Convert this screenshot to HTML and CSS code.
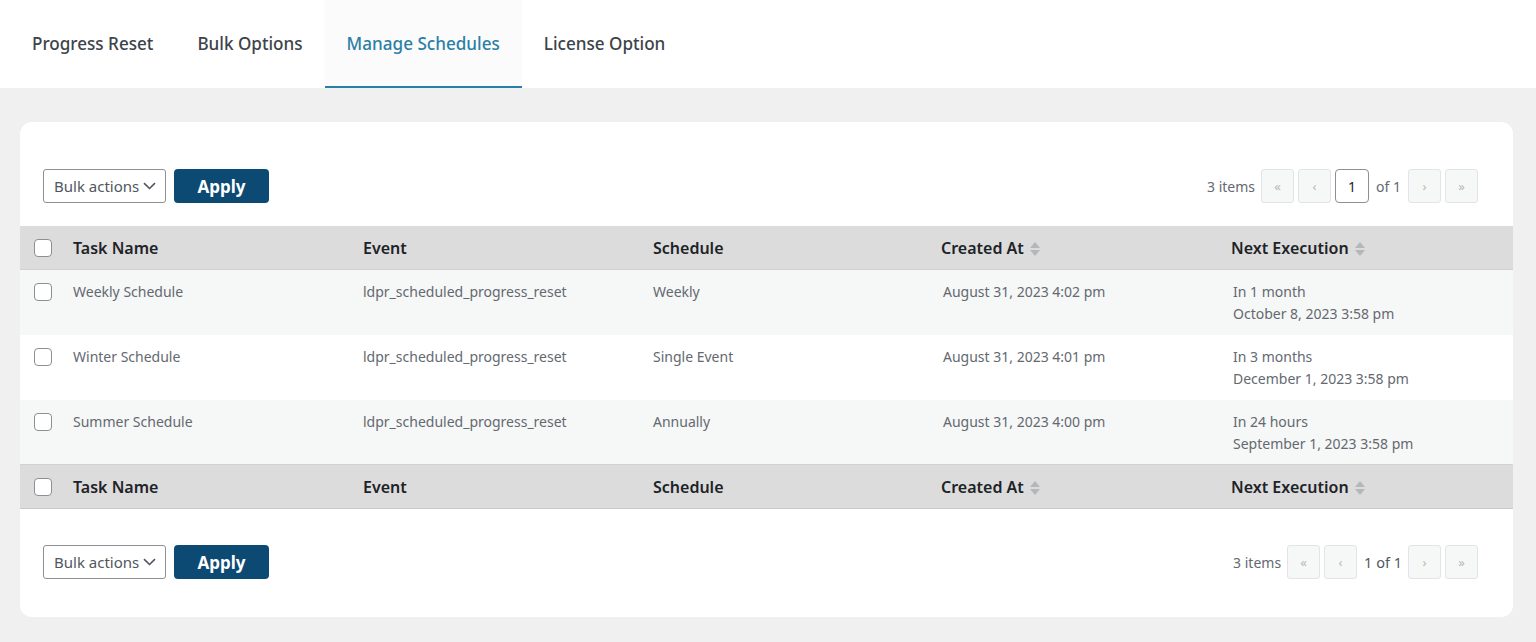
FILE: index.html
```html
<!DOCTYPE html>
<html lang="en">
<head>
   <meta charset="UTF-8">
   <meta name="viewport" content="width=device-width, initial-scale=1.0">
   <title>Manage Schedules</title>
   <link rel="stylesheet" href="styles.css">
</head>
<body>
   <nav class="tabs">
      <a class="tab">Progress Reset</a>
      <a class="tab">Bulk Options</a>
      <a class="tab active">Manage Schedules</a>
      <a class="tab">License Option</a>
   </nav>

   <main class="page">
      <div class="card">
         <div class="tablenav top">
            <div class="actions">
               <div class="select">Bulk actions
                  <svg width="13" height="8" viewBox="0 0 13 8"><path d="M1 1.2l5.5 5.3 5.5-5.3" fill="none" stroke="#50575e" stroke-width="1.6"/></svg>
               </div>
               <button class="apply">Apply</button>
            </div>
            <div class="pages">
               <span class="count">3 items</span>
               <span class="pbtn">&laquo;</span>
               <span class="pbtn">&lsaquo;</span>
               <span class="current">1</span>
               <span class="of">of 1</span>
               <span class="pbtn">&rsaquo;</span>
               <span class="pbtn">&raquo;</span>
            </div>
         </div>

         <table class="list">
            <colgroup>
               <col class="c-check"><col><col><col><col><col>
            </colgroup>
            <thead>
               <tr>
                  <th class="check"><span class="box"></span></th>
                  <th>Task Name</th>
                  <th>Event</th>
                  <th>Schedule</th>
                  <th class="sort">Created At <span class="arrows"></span></th>
                  <th class="sort">Next Execution <span class="arrows"></span></th>
               </tr>
            </thead>
            <tbody>
               <tr>
                  <td class="check"><span class="box"></span></td>
                  <td>Weekly Schedule</td>
                  <td>ldpr_scheduled_progress_reset</td>
                  <td>Weekly</td>
                  <td class="date">August 31, 2023 4:02 pm</td>
                  <td>In 1 month<br>October 8, 2023 3:58 pm</td>
               </tr>
               <tr>
                  <td class="check"><span class="box"></span></td>
                  <td>Winter Schedule</td>
                  <td>ldpr_scheduled_progress_reset</td>
                  <td>Single Event</td>
                  <td class="date">August 31, 2023 4:01 pm</td>
                  <td>In 3 months<br>December 1, 2023 3:58 pm</td>
               </tr>
               <tr>
                  <td class="check"><span class="box"></span></td>
                  <td>Summer Schedule</td>
                  <td>ldpr_scheduled_progress_reset</td>
                  <td>Annually</td>
                  <td class="date">August 31, 2023 4:00 pm</td>
                  <td>In 24 hours<br>September 1, 2023 3:58 pm</td>
               </tr>
            </tbody>
            <tfoot>
               <tr>
                  <th class="check"><span class="box"></span></th>
                  <th>Task Name</th>
                  <th>Event</th>
                  <th>Schedule</th>
                  <th class="sort">Created At <span class="arrows"></span></th>
                  <th class="sort">Next Execution <span class="arrows"></span></th>
               </tr>
            </tfoot>
         </table>

         <div class="tablenav bottom">
            <div class="actions">
               <div class="select">Bulk actions
                  <svg width="13" height="8" viewBox="0 0 13 8"><path d="M1 1.2l5.5 5.3 5.5-5.3" fill="none" stroke="#50575e" stroke-width="1.6"/></svg>
               </div>
               <button class="apply">Apply</button>
            </div>
            <div class="pages">
               <span class="count">3 items</span>
               <span class="pbtn">&laquo;</span>
               <span class="pbtn">&lsaquo;</span>
               <span class="of wide">1 of 1</span>
               <span class="pbtn">&rsaquo;</span>
               <span class="pbtn">&raquo;</span>
            </div>
         </div>
      </div>
   </main>
</body>
</html>
```

FILE: styles.css
```css
body {
   margin: 0;
   background: #f0f0f1;
   font-family: "Noto Sans", "Open Sans", sans-serif;
   color: #1d2327;
}
.tabs {
   height: 88px;
   background: #fff;
   display: flex;
   padding-left: 10px;
}
.tab {
   display: flex;
   align-items: center;
   padding: 0 22px;
   font-size: 17.1px;
   font-weight: 500;
   color: #3c434a;
   border-bottom: 2px solid transparent;
}
.tab.active {
   color: #2b7fa6;
   background: #fbfbfb;
   border-bottom-color: #2b7fa6;
}
.page {
   padding: 34px 23px 25px 20px;
}
.card {
   background: #fff;
   border-radius: 12px;
   padding: 47px 0 38px;
}
.tablenav {
   display: flex;
   justify-content: space-between;
   align-items: center;
   padding: 0 35px 0 23px;
   height: 34px;
}
.tablenav.bottom {
   margin-top: 36px;
}
.actions {
   display: flex;
   gap: 8px;
}
.select {
   width: 123px;
   height: 34px;
   box-sizing: border-box;
   padding: 0 9px 0 10px;
   border: 1px solid #8c8f94;
   border-radius: 3px;
   display: flex;
   align-items: center;
   justify-content: space-between;
   font-size: 15px;
   color: #50575e;
}
.apply {
   width: 95px;
   height: 34px;
   background: #0d4a73;
   border: none;
   border-radius: 4px;
   color: #fff;
   font-family: inherit;
   font-size: 17px;
   font-weight: 700;
}
.pages {
   display: flex;
   align-items: center;
   gap: 4px;
   font-size: 14px;
   color: #646970;
}
.count {
   margin-right: 2px;
}
.pbtn {
   width: 33px;
   height: 34px;
   box-sizing: border-box;
   display: flex;
   align-items: center;
   justify-content: center;
   background: #f6f7f7;
   border: 1px solid #e2e4e7;
   border-radius: 3px;
   color: #b4b7ba;
   font-size: 13px;
}
.current {
   width: 34px;
   height: 34px;
   box-sizing: border-box;
   display: flex;
   align-items: center;
   justify-content: center;
   border: 1px solid #8c8f94;
   border-radius: 4px;
   color: #1d2327;
}
.of {
   margin: 0 3px;
}
.of.wide {
   margin: 0 2px 0 3px;
   font-size: 14.5px;
   color: #50575e;
}
.list {
   width: 100%;
   border-collapse: collapse;
   table-layout: fixed;
   margin-top: 23px;
}
.c-check {
   width: 43px;
}
.list th {
   background: #dcdcdc;
   height: 43px;
   padding: 0 10px;
   text-align: left;
   font-size: 16px;
   font-weight: 600;
   color: #1d2327;
}
.list th.sort {
   padding-left: 8px;
}
.list thead th {
   border-bottom: 1px solid #d2d2d2;
}
.list td {
   height: 65px;
   box-sizing: border-box;
   padding: 11px 10px 0;
   vertical-align: top;
   font-size: 14px;
   line-height: 22px;
   color: #646970;
}
.list tbody tr:nth-child(odd) td {
   background: #f6f7f7;
}
.list tfoot th {
   border-top: 1px solid #d2d2d2;
   border-bottom: 1px solid #c9c9c9;
}
.list .check {
   padding: 0 0 0 14px;
   vertical-align: middle;
}
.list td.check {
   vertical-align: top;
   padding-top: 13px;
}
.box {
   display: block;
   width: 18px;
   height: 18px;
   box-sizing: border-box;
   border: 1px solid #8c8f94;
   border-radius: 4px;
   background: #fff;
}
.arrows {
   display: inline-block;
   position: relative;
   width: 10px;
   height: 16px;
   vertical-align: middle;
   margin-left: 2px;
}
.arrows::before,
.arrows::after {
   content: "";
   position: absolute;
   left: 0;
   border-left: 5px solid transparent;
   border-right: 5px solid transparent;
}
.arrows::before {
   top: 1px;
   border-bottom: 6px solid #b4b7ba;
}
.arrows::after {
   bottom: 1px;
   border-top: 6px solid #b4b7ba;
}
```
